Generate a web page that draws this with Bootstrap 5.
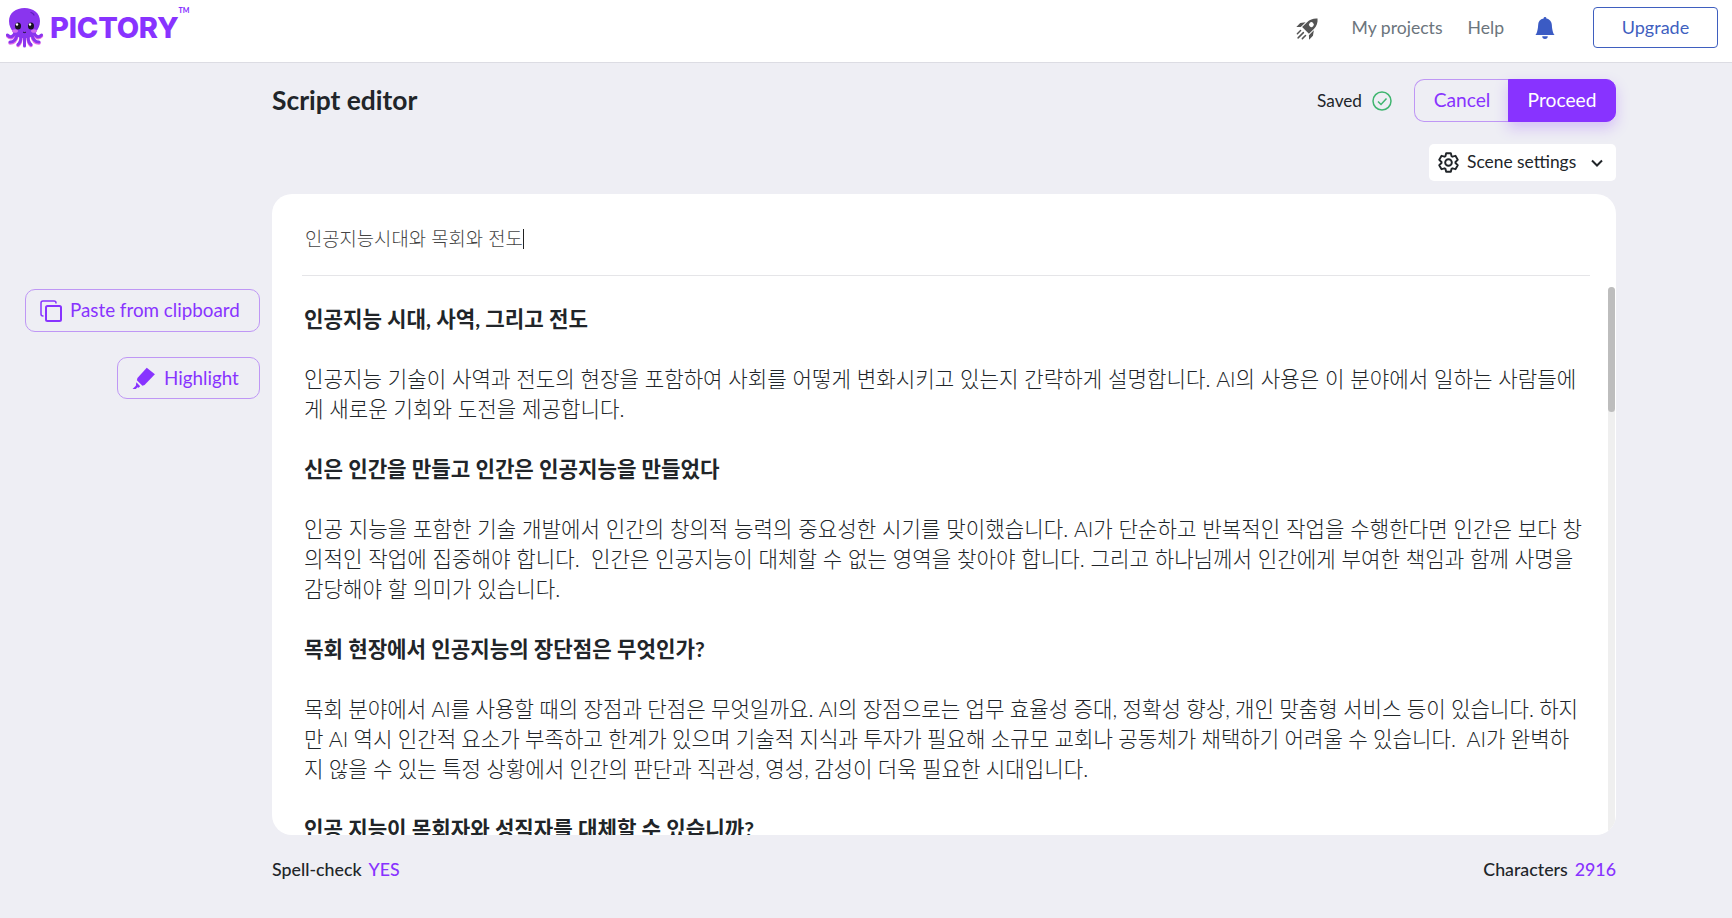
<!DOCTYPE html>
<html lang="ko">
<head>
  <meta charset="UTF-8">
  <title>Script editor</title>
  <link href="https://cdn.jsdelivr.net/npm/bootstrap@5.3.2/dist/css/bootstrap.min.css" rel="stylesheet">
  <style>
    html, body { height: 100%; }
    body {
      background: #eeeef4;
      color: #212529;
      font-family: Lato, "Noto Sans CJK KR", sans-serif;
      font-size: 18px;
      overflow: hidden;
    }
    .top-bar {
      height: 63px;
      padding: 0 14px 7px 6px;
      background: #fff;
      border-bottom: 1px solid #dcdce3;
    }
    .brand-logo { gap: 6px; }
    .brand-name {
      color: #8833ff;
      font-family: Inter, sans-serif;
      font-weight: 800;
      font-size: 29px;
      line-height: 22px;
      letter-spacing: -0.2px;
    }
    .brand-tm { color: #8833ff; font-size: 7px; font-weight: 900; line-height: 8px; margin: -36px 0 0 -6px; }
    .top-link { color: #6c757d; font-size: 17.6px; text-decoration: none; padding-top: 1px; }
    .top-actions { gap: 25px; }
    .rocket-icon { margin-right: 7px; }
    .bell-icon { margin-left: 5px; }
    .btn-upgrade {
      width: 125px;
      height: 41px;
      margin-left: 12px;
      padding: 0;
      color: #3f5fbf;
      background: #fff;
      border: 1px solid #3f5fbf;
      border-radius: 4px;
      font-size: 18px;
    }
    .page-body { height: 855px; }
    .side-col { width: 272px; padding: 226px 12px 0 0; gap: 25px; }
    .main-col { width: 1344px; padding-top: 16px; }
    .page-title { font-size: 26.4px; font-weight: 700; line-height: 40px; margin: 0 0 2px; }
    .saved-text { font-size: 17.2px; margin-right: 10px; }
    .btn-ghost {
      display: inline-flex;
      align-items: center;
      color: #8833ff;
      background: transparent;
      border: 1px solid #bf97f5;
      border-radius: 10px;
      font-size: 18.8px;
      padding: 0;
    }
    .btn-paste { width: 235px; height: 43px; padding-left: 14px; gap: 8px; }
    .btn-mark { width: 143px; height: 42px; padding-left: 14px; gap: 8px; }
    .action-pair { margin-left: 22px; }
    .action-pair .btn { height: 43px; font-size: 19.2px; padding: 0; border-radius: 10px; }
    .btn-cancel { width: 95px; color: #8833ff; border: 1px solid #bf97f5; border-right: 0; }
    .btn-proceed {
      width: 108px;
      color: #fff;
      background: #8833ff;
      border: 1px solid #8833ff;
      box-shadow: 0 6px 14px rgba(136, 51, 255, .25);
    }
    .scene-row { margin-top: 22px; }
    .scene-btn {
      width: 187px;
      height: 37px;
      padding: 0 13px 0 9px;
      background: #fff;
      border-radius: 5px;
      font-size: 17.4px;
      gap: 8px;
    }
    .scene-btn span { margin-top: -1px; }
    .editor-box {
      position: relative;
      height: 641px;
      margin-top: 13px;
      background: #fff;
      border-radius: 20px;
      overflow: hidden;
    }
    .editor-title {
      height: 82px;
      margin: 0 26px 0 30px;
      padding: 8px 0 0 3px;
      border-bottom: 1px solid #e5e5e8;
      color: #444;
      font-family: "Noto Sans CJK KR", sans-serif;
      font-size: 18.8px;
      font-weight: 300;
    }
    .caret-bar { display: inline-block; width: 1px; height: 20px; background: #222; }
    .editor-text {
      padding: 28px 20px 0 32px;
      font-family: Lato, "Noto Sans CJK KR", sans-serif;
      font-size: 21.2px;
      line-height: 30px;
      color: #212529;
    }
    .editor-text p { margin: 0 0 30px; font-weight: 300; white-space: pre-wrap; }
    .editor-text p.tight-words { word-spacing: -0.5px; }
    .editor-text h2 { margin: 0 0 30px; font-size: 21.2px; line-height: 30px; font-weight: 700; color: #212529; }
    .scroll-track {
      position: absolute;
      top: 93px;
      right: 1px;
      bottom: 2px;
      width: 7px;
      background: #efefef;
      border-radius: 4px;
    }
    .scroll-thumb { height: 125px; background: #bdbdbd; border-radius: 4px; }
    .foot-row { margin-top: 21px; font-size: 17.8px; font-weight: 500; }
    .foot-value { color: #8833ff; margin-left: 7px; }
  </style>
</head>
<body>
  <nav class="top-bar d-flex align-items-center justify-content-between">
    <div class="brand-logo d-flex align-items-center">
      <svg width="38" height="40" viewBox="0 0 38 40">
        <!-- tentacles: pink underside first, purple on top -->
        <g fill="none" stroke="#e56be6" stroke-width="3.500" stroke-linecap="round">
          <path d="M9 25C8 30 4 31 1.500 28"/>
          <path d="M28 25c1 5 5 6 7.500 3"/>
          <path d="M11 28c-1 5-4 7-7 7"/>
          <path d="M26 28c1 5 4 7 7 7"/>
          <path d="M15 29c0 5-1 7-3 8.500"/>
          <path d="M22 29c0 5 1 7 3 8.500"/>
        </g>
        <g fill="none" stroke="#8a35ee" stroke-width="3" stroke-linecap="round">
          <path d="M9 24C8 29 4 30 1.500 27"/>
          <path d="M28 24c1 5 5 6 7.500 3"/>
          <path d="M11 27c-1 5-4 7-7 7"/>
          <path d="M26 27c1 5 4 7 7 7"/>
          <path d="M15 28c0 5-1 7-3 8.500"/>
          <path d="M22 28c0 5 1 7 3 8.500"/>
          <path d="M18.500 28v10"/>
        </g>
        <path d="M3 13C3 5 10 0 18.500 0S34 5 34 13c0 5-2 8-4 11-2 4-6 6-11.500 6S9 28 7 24c-2-3-4-6-4-11z" fill="#8a35ee"/>
        <ellipse cx="9" cy="23" rx="3" ry="1.800" fill="#d06cf0"/>
        <ellipse cx="28" cy="23" rx="3" ry="1.800" fill="#d06cf0"/>
        <ellipse cx="12" cy="18" rx="3" ry="3.500" fill="#17121f"/>
        <ellipse cx="25" cy="18" rx="3" ry="3.500" fill="#17121f"/>
        <circle cx="11" cy="16.500" r="1.200" fill="#fff"/>
        <circle cx="24" cy="16.500" r="1.200" fill="#fff"/>
        <path d="M17 24c1 .8 2 .8 3 0" fill="none" stroke="#17121f" stroke-width="1"/>
        <path d="M25 4.500c1.500.5 2.500 1.500 3 2.500" fill="none" stroke="#5d1fb5" stroke-width="1.200" stroke-linecap="round"/>
      </svg>
      <span class="brand-name">PICTORY</span>
      <span class="brand-tm">TM</span>
    </div>
    <div class="top-actions d-flex align-items-center">
      <svg class="rocket-icon" width="24" height="24" viewBox="0 0 24 24">
        <g transform="rotate(45 12 12)" fill="#555">
          <path fill-rule="evenodd" d="M12 -1.500c3 2.500 4.800 6 4.800 10V15.500H7.200V8.500c0-4 1.800-7.500 4.800-10zM12 4.800a2.400 2.400 0 1 0 0 4.800 2.400 2.400 0 0 0 0-4.800z"/>
          <path d="M6.200 9.500V16.500L3 19.500V14zM17.800 9.500V16.500L21 19.500V14z"/>
          <path d="M8.500 19v4.500M12 18.500V26M15.500 19v4.500" stroke="#555" stroke-width="1.500" stroke-linecap="round"/>
        </g>
      </svg>
      <a class="top-link" href="#">My projects</a>
      <a class="top-link" href="#">Help</a>
      <svg class="bell-icon" width="22" height="22" viewBox="0 0 16 16"><path fill="#3b5bc4" d="M8 16a2 2 0 0 0 2-2H6a2 2 0 0 0 2 2zm.995-14.901a1 1 0 1 0-1.990 0A5.002 5.002 0 0 0 3 6c0 1.098-.5 6-2 7h14c-1.500-1-2-5.902-2-7 0-2.420-1.720-4.440-4.005-4.901z"/></svg>
      <button class="btn btn-upgrade" type="button">Upgrade</button>
    </div>
  </nav>

  <div class="page-body d-flex">
    <aside class="side-col d-flex flex-column align-items-end">
      <button class="btn btn-ghost btn-paste" type="button">
        <svg width="22" height="22" viewBox="0 0 22 22" fill="none" stroke="#8833ff" stroke-width="1.500">
          <rect x="6" y="6" width="15" height="15" rx="1.500" stroke-width="2"/>
          <path d="M3.500 16H3a2 2 0 0 1-2-2V3a2 2 0 0 1 2-2h11a2 2 0 0 1 2 2v.5"/>
        </svg>
        Paste from clipboard
      </button>
      <button class="btn btn-ghost btn-mark" type="button">
        <svg width="24" height="24" viewBox="0 0 22 22">
          <path d="M13.500 1.500 21 7.500l-9.500 10-2 .5-5-5 .5-2z" fill="#8833ff"/>
          <path d="M4 15l3.500 3.500-1.500 1.500-1-.5-1.500 1.500H.5L3.500 18z" fill="#8833ff"/>
        </svg>
        Highlight
      </button>
    </aside>

    <main class="main-col">
      <div class="d-flex align-items-center">
        <h1 class="page-title me-auto">Script editor</h1>
        <span class="saved-text">Saved</span>
        <svg width="20" height="20" viewBox="0 0 20 20" fill="none" stroke="#3fb56f" stroke-width="1.500">
          <circle cx="10" cy="10" r="9"/>
          <path d="M6 10.500 9 13.500 14.500 7.500"/>
        </svg>
        <div class="btn-group action-pair">
          <button class="btn btn-cancel" type="button">Cancel</button>
          <button class="btn btn-proceed" type="button">Proceed</button>
        </div>
      </div>

      <div class="scene-row d-flex justify-content-end">
        <div class="scene-btn d-flex align-items-center">
          <svg width="21" height="21" viewBox="0 0 24 24" fill="none" stroke="#212529" stroke-width="2.200" stroke-linejoin="round">
            <circle cx="12" cy="12" r="3.800"/>
            <path d="M8.490 4.810 9.340 1.330H14.660L15.510 4.810 16.470 5.370 19.910 4.350 22.570 8.960 19.980 11.440V12.560L22.570 15.040 19.910 19.650 16.470 18.630 15.510 19.190 14.660 22.670H9.340L8.490 19.190 7.530 18.630 4.090 19.650 1.430 15.040 4.020 12.560V11.440L1.430 8.960 4.090 4.350 7.530 5.370z"/>
          </svg>
          <span class="me-auto">Scene settings</span>
          <svg width="12" height="8" viewBox="0 0 12 8" fill="none" stroke="#212529" stroke-width="2"><path d="M1 1.500 6 6.500 11 1.500"/></svg>
        </div>
      </div>

      <section class="editor-box">
        <div class="editor-title d-flex align-items-center">인공지능시대와 목회와 전도<span class="caret-bar"></span></div>
        <div class="editor-text">
          <h2>인공지능 시대, 사역, 그리고 전도</h2>
          <p>인공지능 기술이 사역과 전도의 현장을 포함하여 사회를 어떻게 변화시키고 있는지 간략하게 설명합니다. AI의 사용은 이 분야에서 일하는 사람들에<br>게 새로운 기회와 도전을 제공합니다.</p>
          <h2>신은 인간을 만들고 인간은 인공지능을 만들었다</h2>
          <p>인공 지능을 포함한 기술 개발에서 인간의 창의적 능력의 중요성한 시기를 맞이했습니다. AI가 단순하고 반복적인 작업을 수행한다면 인간은 보다 창<br>의적인 작업에 집중해야 합니다.  인간은 인공지능이 대체할 수 없는 영역을 찾아야 합니다. 그리고 하나님께서 인간에게 부여한 책임과 함께 사명을<br>감당해야 할 의미가 있습니다.</p>
          <h2>목회 현장에서 인공지능의 장단점은 무엇인가?</h2>
          <p class="tight-words">목회 분야에서 AI를 사용할 때의 장점과 단점은 무엇일까요. AI의 장점으로는 업무 효율성 증대, 정확성 향상, 개인 맞춤형 서비스 등이 있습니다. 하지<br>만 AI 역시 인간적 요소가 부족하고 한계가 있으며 기술적 지식과 투자가 필요해 소규모 교회나 공동체가 채택하기 어려울 수 있습니다.  AI가 완벽하<br>지 않을 수 있는 특정 상황에서 인간의 판단과 직관성, 영성, 감성이 더욱 필요한 시대입니다.</p>
          <h2>인공 지능이 목회자와 성직자를 대체할 수 있습니까?</h2>
        </div>
        <div class="scroll-track"><div class="scroll-thumb"></div></div>
      </section>

      <div class="foot-row d-flex justify-content-between">
        <div>Spell-check<span class="foot-value">YES</span></div>
        <div>Characters<span class="foot-value">2916</span></div>
      </div>
    </main>
  </div>

  <script src="https://cdn.jsdelivr.net/npm/bootstrap@5.3.2/dist/js/bootstrap.bundle.min.js"></script>
</body>
</html>
